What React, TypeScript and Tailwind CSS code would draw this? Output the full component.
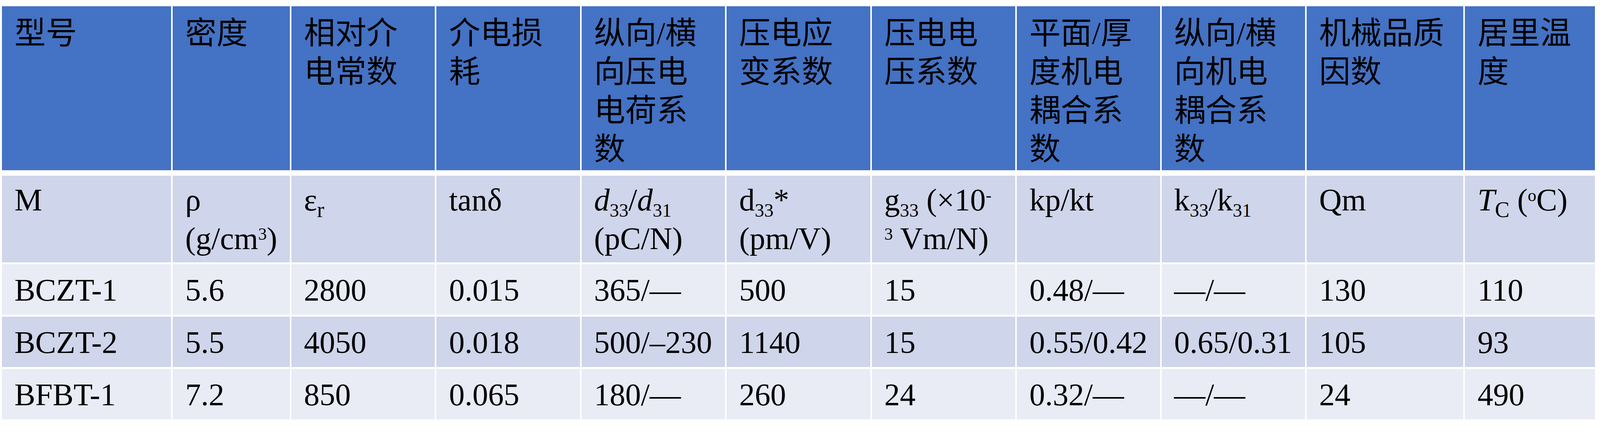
import type { ReactNode } from "react";

// column widths taken from the reference, as fractions so the table always fills the window
const COLS =
  "grid grid-cols-[447fr_309fr_379fr_379fr_379fr_379fr_379fr_378fr_379fr_414fr_343fr] gap-x-[4px]";

const HEADERS: string[][] = [
  ["型号"],
  ["密度"],
  ["相对介", "电常数"],
  ["介电损", "耗"],
  ["纵向/横", "向压电", "电荷系", "数"],
  ["压电应", "变系数"],
  ["压电电", "压系数"],
  ["平面/厚", "度机电", "耦合系", "数"],
  ["纵向/横", "向机电", "耦合系", "数"],
  ["机械品质", "因数"],
  ["居里温", "度"],
];

function Sub({ children, big }: { children: ReactNode; big?: boolean }) {
  return (
    <sub className={big ? "text-[0.7em] bottom-[-0.3em]" : "text-[0.6em] bottom-[-0.33em]"}>
      {children}
    </sub>
  );
}

function Sup({ children }: { children: ReactNode }) {
  return <sup className="text-[0.55em] top-[-0.55em]">{children}</sup>;
}

const UNITS: ReactNode[] = [
  "M",
  <>
    ρ<br />
    (g/cm<Sup>3</Sup>)
  </>,
  <>
    ε<Sub big>r</Sub>
  </>,
  "tanδ",
  <>
    <i>d</i>
    <Sub>33</Sub>/<i>d</i>
    <Sub>31</Sub>
    <br />
    (pC/N)
  </>,
  <>
    d<Sub>33</Sub>*<br />
    (pm/V)
  </>,
  <>
    g<Sub>33</Sub> (×10<Sup>-</Sup>
    <br />
    <Sup>3</Sup> Vm/N)
  </>,
  "kp/kt",
  <>
    k<Sub>33</Sub>/k<Sub>31</Sub>
  </>,
  "Qm",
  <>
    <i>T</i>
    <Sub big>C</Sub> (<Sup>o</Sup>C)
  </>,
];

const ROWS: string[][] = [
  ["BCZT-1", "5.6", "2800", "0.015", "365/—", "500", "15", "0.48/—", "—/—", "130", "110"],
  ["BCZT-2", "5.5", "4050", "0.018", "500/–230", "1140", "15", "0.55/0.42", "0.65/0.31", "105", "93"],
  ["BFBT-1", "7.2", "850", "0.065", "180/—", "260", "24", "0.32/—", "—/—", "24", "490"],
];

export default function App() {
  return (
    <div
      className="w-full h-[1109px] bg-white pl-[5px] pr-[13px] pt-[16px] text-black text-[80px] leading-[99px]"
      style={{ fontFamily: '"Liberation Serif", "Noto Sans CJK SC", serif' }}
    >
      <div className={`${COLS} h-[420px]`}>
        {HEADERS.map((lines, i) => (
          <div key={i} className="bg-[#4472c4] pl-[32px] pt-[20px] whitespace-nowrap">
            {lines.map((l, j) => (
              <div key={j}>{l}</div>
            ))}
          </div>
        ))}
      </div>

      <div className={`${COLS} mt-[14px] gap-y-[5px] grid-rows-[222px_129px_129px_129px]`}>
        {UNITS.map((u, i) => (
          <div key={i} className="bg-[#cfd5ea] pl-[32px] pt-[13px] whitespace-nowrap">
            {u}
          </div>
        ))}
        {ROWS.map((row, r) =>
          row.map((cell, i) => (
            <div
              key={`${r}-${i}`}
              className={`${r % 2 === 0 ? "bg-[#e9ebf5]" : "bg-[#cfd5ea]"} pl-[32px] pt-[17px] whitespace-nowrap`}
            >
              {cell}
            </div>
          ))
        )}
      </div>
    </div>
  );
}
